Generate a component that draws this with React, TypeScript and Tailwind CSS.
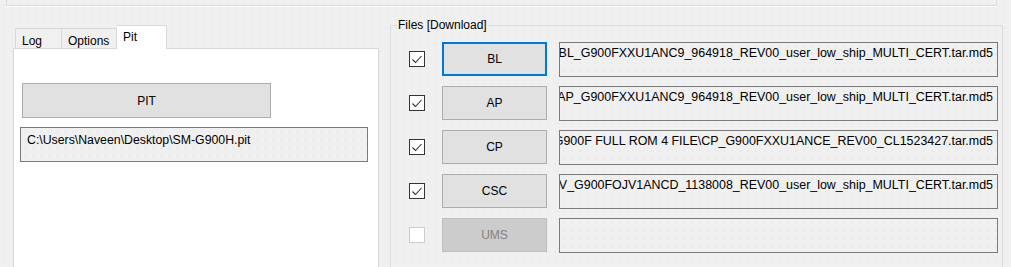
import React from "react";

const DOTS =
  "bg-[#f0f0f0] bg-[radial-gradient(circle,#e3e3e3_0.6px,transparent_0.8px)] bg-[length:8px_8px]";

const BASE = "C:\\Users\\Naveen\\Desktop\\G900F FULL ROM 4 FILE\\";

type FileRow = {
  label: string;
  file: string;
  checked: boolean;
  focused?: boolean;
  disabled?: boolean;
};

const rows: FileRow[] = [
  {
    label: "BL",
    file: BASE + "BL_G900FXXU1ANC9_964918_REV00_user_low_ship_MULTI_CERT.tar.md5",
    checked: true,
    focused: true,
  },
  {
    label: "AP",
    file: BASE + "AP_G900FXXU1ANC9_964918_REV00_user_low_ship_MULTI_CERT.tar.md5",
    checked: true,
  },
  {
    label: "CP",
    file: BASE + "CP_G900FXXU1ANCE_REV00_CL1523427.tar.md5",
    checked: true,
  },
  {
    label: "CSC",
    file: BASE + "CSC_OJV_G900FOJV1ANCD_1138008_REV00_user_low_ship_MULTI_CERT.tar.md5",
    checked: true,
  },
  { label: "UMS", file: "", checked: false, disabled: true },
];

const CheckBox: React.FC<{ checked: boolean; disabled?: boolean }> = ({
  checked,
  disabled,
}) => (
  <div
    className={
      "w-[16px] h-[16px] flex items-center justify-center border shrink-0 " +
      (disabled ? "border-[#cccccc] bg-white" : "border-[#333333] bg-white")
    }
  >
    {checked && (
      <svg width="12" height="12" viewBox="0 0 12 12">
        <path d="M1.5 6.5 L4.5 9.5 L10.5 3" fill="none" stroke="#333333" strokeWidth="1.1" />
      </svg>
    )}
  </div>
);

const FileLine: React.FC<{ row: FileRow }> = ({ row }) => {
  const btn = row.disabled
    ? "bg-[#cccccc] border border-[#bfbfbf] text-[#838383]"
    : row.focused
      ? "bg-[#e1e1e1] border-2 border-[#0078d7] text-black"
      : "bg-[#e1e1e1] border border-[#adadad] text-black";
  return (
    <div className="flex items-center h-[34px]">
      <div className="ml-[18px]">
        <CheckBox checked={row.checked} disabled={row.disabled} />
      </div>
      <div className={"ml-[17px] w-[105px] h-[34px] flex items-center justify-center " + btn}>
        {row.label}
      </div>
      <div
        className={
          "ml-[12px] w-[439px] h-[35px] self-start border border-[#7a7a7a] overflow-hidden flex justify-end pr-[4px] pt-[2px] whitespace-nowrap text-[12.45px] leading-[16px] " +
          DOTS
        }
      >
        <span>{row.file}</span>
      </div>
    </div>
  );
};

const App: React.FC = () => {
  return (
    <div
      className={"w-[1011px] h-[267px] overflow-hidden text-[12px] text-black " + DOTS}
      style={{ fontFamily: '"Liberation Sans", Arial, sans-serif' }}
    >
      <div className="ml-[6px] w-[991px] h-[6px] border-l border-r border-b border-[#dcdcdc] shadow-[0_1px_0_#ffffff]" />
      <div className="flex items-start">
        {/* left tab control */}
        <div className="ml-[13px] mt-[19px] w-[366px]">
          <div className="flex items-end pl-[2px] h-[23px]">
            <div className="w-[47px] h-[20px] border border-b-0 border-[#d9d9d9] bg-[#f0f0f0] pl-[6px] pt-[3px]">
              Log
            </div>
            <div className="w-[55px] h-[20px] border border-b-0 border-l-0 border-[#d9d9d9] bg-[#f0f0f0] pl-[6px] pt-[3px]">
              Options
            </div>
            <div className="w-[50px] h-[24px] border border-b-0 border-l-0 border-[#d9d9d9] bg-white pl-[6px] pt-[2px] -mb-[1px] relative z-10">
              Pit
            </div>
          </div>
          <div className="h-[230px] bg-white border border-[#d9d9d9] pt-[34px]">
            <div className="ml-[8px] w-[249px] h-[35px] bg-[#e1e1e1] border border-[#adadad] flex items-center justify-center">
              PIT
            </div>
            <div
              className={
                "ml-[6px] mt-[9px] w-[348px] h-[35px] border border-[#7a7a7a] pl-[6px] pt-[3px] text-[12.3px] " + DOTS
              }
            >
              C:\Users\Naveen\Desktop\SM-G900H.pit
            </div>
          </div>
        </div>

        {/* files group box */}
        <div className="ml-[11px] mt-[19px] w-[613px] h-[260px] border border-[#dcdcdc] relative flex flex-col gap-[10px] pt-[16px]">
          <div className="absolute -top-[9px] left-[6px] px-[1px] bg-[#f0f0f0] leading-[16px]">
            Files [Download]
          </div>
          {rows.map((r) => (
            <FileLine key={r.label} row={r} />
          ))}
        </div>
      </div>
    </div>
  );
};

export default App;
